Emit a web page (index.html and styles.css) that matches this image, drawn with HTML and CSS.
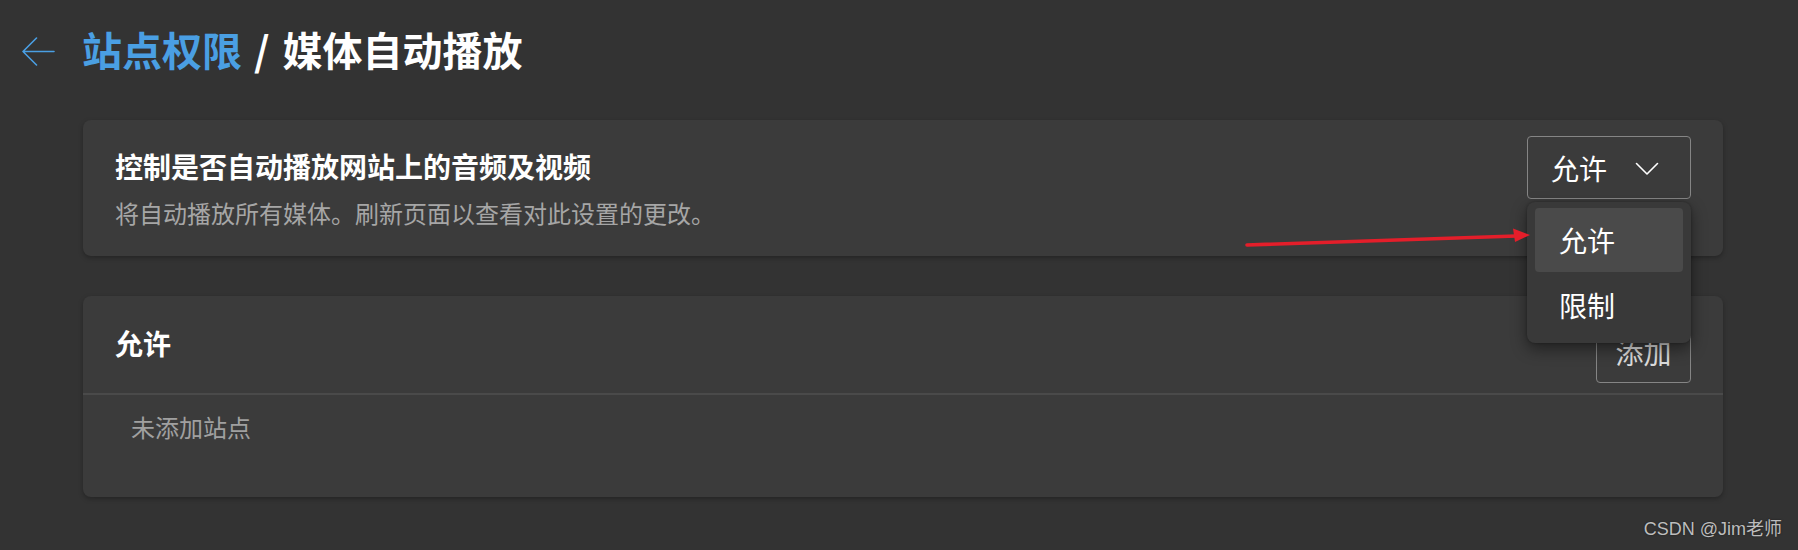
FILE: index.html
```html
<!DOCTYPE html>
<html lang="zh-CN">
<head>
<meta charset="utf-8">
<title>站点权限 / 媒体自动播放</title>
<link rel="stylesheet" href="styles.css">
</head>
<body>
<header class="top">
  <button class="back" aria-label="返回">
    <svg width="33" height="29" viewBox="0 0 33 29" fill="none" stroke="currentColor" stroke-width="1.6" stroke-linecap="round" stroke-linejoin="round">
      <path d="M32 14.5H1M14.5 1L1 14.5L14.5 28"/>
    </svg>
  </button>
  <h1 class="title"><span class="crumb">站点权限</span><span class="sep">/</span>媒体自动播放</h1>
</header>

<main class="content">
  <section class="card setting">
    <div class="setting-text">
      <div class="setting-title">控制是否自动播放网站上的音频及视频</div>
      <div class="setting-desc">将自动播放所有媒体。刷新页面以查看对此设置的更改。</div>
    </div>
    <div class="select">
      <div class="select-btn">
        <span>允许</span>
        <svg width="24" height="14" viewBox="0 0 24 14" fill="none" stroke="currentColor" stroke-width="1.6" stroke-linecap="round" stroke-linejoin="round"><path d="M1.5 1.5L12 12L22.5 1.5"/></svg>
      </div>
      <ul class="menu">
        <li class="menu-item selected">允许</li>
        <li class="menu-item">限制</li>
      </ul>
    </div>
  </section>

  <section class="card list">
    <div class="list-head">
      <div class="list-title">允许</div>
      <button class="add-btn">添加</button>
    </div>
    <div class="list-body">未添加站点</div>
  </section>
</main>

<svg class="annot" width="300" height="30" viewBox="0 0 300 30">
  <path d="M7 20L276 11" stroke="#e41e2a" stroke-width="3.6" stroke-linecap="round"/>
  <path d="M290 10L273 3.5L275 17Z" fill="#e41e2a"/>
</svg>

<div class="watermark">CSDN @Jim老师</div>
</body>
</html>
```

FILE: styles.css
```css
* { box-sizing: border-box; }

html, body {
  margin: 0;
  padding: 0;
}

body {
  position: relative;
  width: 1798px;
  height: 550px;
  overflow: hidden;
  background: #333333;
  color: #ffffff;
  font-family: "Noto Sans CJK SC", "Noto Sans", sans-serif;
}

.top {
  display: flex;
  align-items: flex-start;
  gap: 27px;
  padding: 21px 0 0 22px;
  height: 77px;
}

.back {
  margin-top: 16px;
  padding: 0;
  border: 0;
  background: none;
  color: #4a9fe3;
  display: flex;
}

.title {
  margin: 0;
  font-size: 40px;
  line-height: 56px;
  font-weight: 700;
  color: #ffffff;
  white-space: nowrap;
}

.crumb { color: #4a9fe3; }

.sep { margin: 0 13px 0 12px; }

.content {
  padding: 0 75px 0 83px;
  margin-top: 43px;
  display: flex;
  flex-direction: column;
  gap: 40px;
}

.card {
  background: #3b3b3b;
  border-radius: 8px;
  box-shadow: 0 2px 5px rgba(0, 0, 0, 0.28);
}

.setting {
  display: flex;
  justify-content: space-between;
  align-items: flex-start;
  padding: 16px 32px 26px 32px;
  height: 136px;
  position: relative;
  z-index: 2;
}

.setting-text { padding-top: 10px; }

.setting-title {
  font-size: 28px;
  line-height: 40px;
  font-weight: 700;
  margin-bottom: 10px;
}

.setting-desc {
  font-size: 24px;
  line-height: 34px;
  color: #a6a6a6;
}

.select {
  position: relative;
  width: 164px;
}

.select-btn {
  height: 63px;
  border: 1.5px solid #858585;
  border-radius: 4px;
  display: flex;
  align-items: center;
  padding: 0 31px 0 23px;
  justify-content: space-between;
  font-size: 28px;
  color: #ffffff;
}

.select-btn svg { margin-top: 2px; }

.menu {
  position: absolute;
  top: calc(100% + 3px);
  left: 0;
  width: 164px;
  margin: 0;
  padding: 6px 8px;
  list-style: none;
  background: #393939;
  border-radius: 8px;
  box-shadow: 0 6px 16px rgba(0, 0, 0, 0.45), 0 0 3px rgba(0, 0, 0, 0.3);
  display: flex;
  flex-direction: column;
  gap: 1px;
}

.menu-item {
  height: 64px;
  display: flex;
  align-items: center;
  padding-left: 24px;
  font-size: 28px;
  border-radius: 4px;
  color: #ffffff;
}

.menu-item.selected { background: #4a4a4a; }

.list {
  height: 201px;
  display: flex;
  flex-direction: column;
}

.list-head {
  display: flex;
  justify-content: space-between;
  align-items: flex-start;
  padding: 24px 32px 10px 32px;
  border-bottom: 2px solid #4a4a4a;
}

.list-title {
  padding-top: 3px;
  font-size: 28px;
  line-height: 40px;
  font-weight: 700;
}

.add-btn {
  width: 95px;
  height: 63px;
  border: 1.5px solid #858585;
  border-radius: 4px;
  background: transparent;
  color: #dcdcdc;
  font-family: inherit;
  font-size: 28px;
  padding: 0;
}

.list-body {
  padding: 15px 48px 0 48px;
  font-size: 24px;
  line-height: 34px;
  color: #a0a0a0;
}

.annot {
  position: absolute;
  left: 1240px;
  top: 225px;
  z-index: 3;
}

.watermark {
  position: absolute;
  right: 16px;
  top: 518px;
  font-family: "Liberation Sans", "Noto Sans CJK SC", sans-serif;
  font-size: 18px;
  line-height: 22px;
  color: #bdbdbd;
  text-shadow: 0 0 2px rgba(0, 0, 0, 0.5);
  z-index: 4;
}
```
